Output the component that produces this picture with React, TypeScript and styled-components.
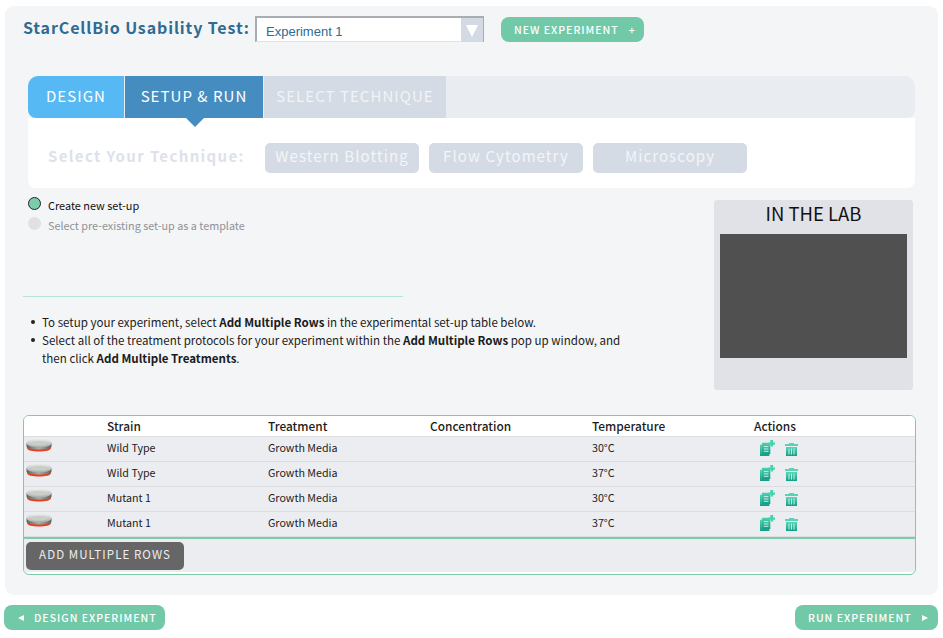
import React from "react";
import styled, { createGlobalStyle } from "styled-components";

const Global = createGlobalStyle`
  html, body { margin: 0; padding: 0; background: #fff; }
  body { font-family: "Noto Sans CJK JP", "Noto Sans", sans-serif; width: 943px; height: 638px; overflow: hidden; }
  * { box-sizing: border-box; }
`;

const Page = styled.div`
  width: 943px;
  height: 638px;
  padding: 6px 5px 0 5px;
`;
const Panel = styled.div`
  width: 933px;
  height: 589px;
  background: #f4f5f7;
  border-radius: 9px;
  padding: 10px 22px 0 18px;
`;
const Header = styled.div`
  display: flex;
  align-items: flex-start;
  height: 60px;
`;
const Title = styled.div`
  font-size: 16px;
  line-height: 23px;
  font-weight: 700;
  letter-spacing: 0.88px;
  color: #2f6b92;
  width: 232px;
  white-space: nowrap;
`;
const SelectBox = styled.div`
  width: 229px;
  height: 26px;
  display: flex;
  background: #fff;
  border-top: 2px solid #a9acb1;
  border-left: 2px solid #a9acb1;
  border-bottom: 1px solid #dfe2e7;
`;
const SelectValue = styled.div`
  flex: 1;
  font-family: "Liberation Sans", Arial, sans-serif;
  font-size: 13px;
  line-height: 27px;
  color: #2f6b92;
  padding-left: 9px;
`;
const SelectArrow = styled.div`
  width: 23px;
  height: 24px;
  margin-bottom: -1px;
  background: #d4dae4;
  border-right: 1px solid #a9acb1;
  display: flex;
  align-items: center;
  justify-content: center;
  &::after {
    content: "";
    margin-top: 1px;
    border-left: 6px solid transparent;
    border-right: 6px solid transparent;
    border-top: 12px solid #fff;
  }
`;
const PillButton = styled.div`
  height: 25px;
  background: #72c9a8;
  border-radius: 8px;
  color: #fff;
  font-size: 10.5px;
  font-weight: 500;
  letter-spacing: 1px;
  line-height: 25px;
  display: inline-flex;
  align-items: center;
  white-space: nowrap;
`;
const NewButton = styled(PillButton)`
  width: 143px;
  margin: 1px 0 0 17px;
  padding-left: 13px;
  gap: 10px;
`;
const Tabs = styled.div`
  margin-left: 5px;
  width: 887px;
  height: 42px;
  background: #e9ecf0;
  border-radius: 10px 10px 8px 8px;
  display: flex;
`;
const Tab = styled.div<{ $bg: string; $w: number; $first?: boolean; $color?: string }>`
  width: ${p => p.$w}px;
  background: ${p => p.$bg};
  color: ${p => p.$color || "#fff"};
  font-size: 15px;
  letter-spacing: 1.05px;
  line-height: 40px;
  text-align: center;
  white-space: nowrap;
  margin-right: 1px;
  border-radius: ${p => (p.$first ? "10px 0 0 8px" : "0")};
  position: relative;
`;
const Notch = styled.div`
  position: absolute;
  left: 60px;
  top: 41px;
  width: 0;
  height: 0;
  border-left: 10px solid transparent;
  border-right: 10px solid transparent;
  border-top: 10px solid #458dc0;
`;
const TechCard = styled.div`
  margin-left: 5px;
  width: 887px;
  height: 70px;
  background: #fff;
  border-radius: 0 0 8px 8px;
  display: flex;
  align-items: flex-start;
  padding: 25px 0 0 20px;
`;
const TechLabel = styled.div`
  width: 217px;
  color: #dde2ea;
  font-size: 15px;
  font-weight: 700;
  letter-spacing: 1.35px;
  line-height: 26px;
  white-space: nowrap;
`;
const TechButton = styled.div`
  width: 154px;
  height: 30px;
  margin-right: 10px;
  background: #d5dbe4;
  border-radius: 5px;
  color: #f3f5f8;
  font-size: 15px;
  letter-spacing: 1.1px;
  line-height: 26px;
  text-align: center;
  white-space: nowrap;
`;
const Middle = styled.div`
  display: flex;
  justify-content: space-between;
  height: 215px;
  margin-top: 12px;
`;
const LeftCol = styled.div`
  width: 612px;
  margin-top: -6px;
`;
const RadioRow = styled.div<{ $muted?: boolean }>`
  display: flex;
  align-items: center;
  height: 20.5px;
  margin-left: 5px;
  font-size: ${p => (p.$muted ? "10.8px" : "10.9px")};
  padding-top: ${p => (p.$muted ? "0" : "1px")};
  color: ${p => (p.$muted ? "#8f9296" : "#111")};
`;
const Radio = styled.span<{ $on?: boolean }>`
  width: 13px;
  height: 13px;
  border-radius: 50%;
  margin: -3px 7px 0 0;
  background: ${p => (p.$on ? "#7ccba9" : "#e0e1e3")};
  border: 1px solid ${p => (p.$on ? "#222" : "#e0e1e3")};
  flex: none;
`;
const Rule = styled.div`
  width: 380px;
  height: 1px;
  background: #b5e5d2;
  margin-top: 61px;
`;
const Notes = styled.ul`
  margin: 16px 0 0;
  padding: 0 0 0 19px;
  list-style: none;
  font-size: 11.55px;
  line-height: 18px;
  color: #1b1b1b;
  li { position: relative; }
  li::before {
    content: "";
    position: absolute;
    left: -11px;
    top: 7px;
    width: 4px;
    height: 4px;
    border-radius: 50%;
    background: #222;
  }
  b { font-weight: 700; }
`;
const LabBox = styled.div`
  width: 199px;
  height: 190px;
  margin-right: 3px;
  background: #e1e2e7;
  border-radius: 3px;
  padding: 0 6px;
`;
const LabTitle = styled.div`
  font-size: 18.5px;
  line-height: 26px;
  text-align: center;
  color: #111;
`;
const LabScreen = styled.div`
  height: 124px;
  margin-top: 8px;
  background: #505050;
`;
const TableWrap = styled.div`
  width: 893px;
  height: 160px;
  border: 1px solid #7ccba9;
  border-radius: 6px;
  background: #fff;
  overflow: hidden;
`;
const Row = styled.div<{ $head?: boolean }>`
  display: grid;
  grid-template-columns: 83px 161px 162px 162px 162px 1fr;
  align-items: center;
  font-size: ${p => (p.$head ? "11.9px" : "10.7px")};
  font-weight: ${p => (p.$head ? 500 : 400)};
  color: #1c1c1c;
  line-height: 20px;
  background: ${p => (p.$head ? "#fff" : "#ecedf1")};
  border-bottom: 1px solid #dcdde0;
  height: ${p => (p.$head ? "21px" : "25px")};
  padding-bottom: ${p => (p.$head ? "3px" : "2px")};
`;
const DishCell = styled.div`
  padding-left: 2px;
  height: 20px;
`;
const ActionCell = styled.div`
  display: flex;
  align-items: center;
  gap: 10px;
  padding-left: 6px;
`;
const TrashSlot = styled.span`
  display: flex;
  margin-top: 2px;
`;
const TableFoot = styled.div`
  height: 35px;
  background: #ecedf1;
  border-top: 2px solid #7ccba9;
  padding: 3px 0 0 2px;
`;
const AddRows = styled.div`
  width: 158px;
  height: 28px;
  background: #666;
  border-radius: 5px;
  color: #eee;
  font-size: 11.5px;
  letter-spacing: 1.08px;
  line-height: 25px;
  text-align: center;
  white-space: nowrap;
`;
const Footer = styled.div`
  display: flex;
  justify-content: space-between;
  margin: 10px 0 0 -1px;
  width: 934px;
`;
const BackButton = styled(PillButton)`
  width: 161px;
  padding-left: 14px;
  gap: 10px;
`;
const RunButton = styled(PillButton)`
  width: 143px;
  padding-left: 13px;
  gap: 10px;
`;
const Arrow = styled.span<{ $dir: "l" | "r" }>`
  width: 0;
  height: 0;
  border-top: 3.5px solid transparent;
  border-bottom: 3.5px solid transparent;
  ${p => (p.$dir === "l" ? "border-right: 6px solid #fff;" : "border-left: 6px solid #fff;")}
`;

const Dish = () => (
  <svg width="26" height="14" viewBox="0 0 26 14">
    <defs>
      <linearGradient id="dishSide" x1="0" y1="0" x2="1" y2="0">
        <stop offset="0" stopColor="#5c6361" />
        <stop offset="0.5" stopColor="#a9aeaa" />
        <stop offset="1" stopColor="#5c6361" />
      </linearGradient>
      <linearGradient id="dishTop" x1="0" y1="0" x2="0" y2="1">
        <stop offset="0" stopColor="#eef0ed" />
        <stop offset="1" stopColor="#a6acaa" />
      </linearGradient>
    </defs>
    <path d="M1 7v3c0 2.400 5.500 3.500 12 3.500s12-1.100 12-3.500V7z" fill="#e8401c" />
    <path d="M0.500 5v3.500c0 2.100 5.600 3 12.500 3s12.500-.900 12.500-3V5z" fill="url(#dishSide)" />
    <ellipse cx="13" cy="5" rx="12.500" ry="4.500" fill="url(#dishTop)" />
    <ellipse cx="13" cy="5.200" rx="8.500" ry="2.400" fill="#c9cec9" />
  </svg>
);

const CopyIcon = () => (
  <svg width="15" height="16" viewBox="0 0 16 17">
    <defs>
      <linearGradient id="iconA" x1="0" y1="0" x2="0" y2="1">
        <stop offset="0" stopColor="#4fd0b0" />
        <stop offset="1" stopColor="#149c86" />
      </linearGradient>
    </defs>
    <path d="M0 5h2v10h8v2H0z" fill="url(#iconA)" />
    <path d="M2 3h9v12H2z" fill="url(#iconA)" />
    <path d="M4 7h5M4 9.500h5M4 12h5" stroke="#d3f3ea" strokeWidth="1" />
    <path d="M11 0h3v2.500h2v2.500h-2v2h-2.500V5H9V2.500h2z" fill="#45d2ae" />
  </svg>
);

const TrashIcon = () => (
  <svg width="13" height="13" viewBox="0 0 13 13">
    <defs>
      <linearGradient id="iconB" x1="0" y1="0" x2="0" y2="1">
        <stop offset="0" stopColor="#5ad6b6" />
        <stop offset="1" stopColor="#149c86" />
      </linearGradient>
    </defs>
    <path d="M4 0h5v1h4v2H0V1h4z" fill="#56d4b4" />
    <path d="M1 4h11v9H1z" fill="url(#iconB)" />
    <path d="M4 5.500v6M6.500 5.500v6M9 5.500v6" stroke="#c9efe4" strokeWidth="1" />
  </svg>
);

const rows = [
  ["Wild Type", "30°C"],
  ["Wild Type", "37°C"],
  ["Mutant 1", "30°C"],
  ["Mutant 1", "37°C"],
];

export default function App() {
  return (
    <Page>
      <Global />
      <Panel>
        <Header>
          <Title>StarCellBio Usability Test:</Title>
          <SelectBox>
            <SelectValue>Experiment 1</SelectValue>
            <SelectArrow />
          </SelectBox>
          <NewButton>
            <span>NEW EXPERIMENT</span>
            <span>+</span>
          </NewButton>
        </Header>
        <Tabs>
          <Tab $bg="#57b9f4" $w={96} $first>DESIGN</Tab>
          <Tab $bg="#458dc0" $w={138}>
            SETUP &amp; RUN
            <Notch />
          </Tab>
          <Tab $bg="#d5dbe4" $w={182} $color="#f1f3f6">SELECT TECHNIQUE</Tab>
        </Tabs>
        <TechCard>
          <TechLabel>Select Your Technique:</TechLabel>
          <TechButton>Western Blotting</TechButton>
          <TechButton>Flow Cytometry</TechButton>
          <TechButton>Microscopy</TechButton>
        </TechCard>
        <Middle>
          <LeftCol>
            <RadioRow><Radio $on />Create new set-up</RadioRow>
            <RadioRow $muted><Radio />Select pre-existing set-up as a template</RadioRow>
            <Rule />
            <Notes>
              <li>To setup your experiment, select <b>Add Multiple Rows</b> in the experimental set-up table below.</li>
              <li>Select all of the treatment protocols for your experiment within the <b>Add Multiple Rows</b> pop up window, and then click <b>Add Multiple Treatments</b>.</li>
            </Notes>
          </LeftCol>
          <LabBox>
            <LabTitle>IN THE LAB</LabTitle>
            <LabScreen />
          </LabBox>
        </Middle>
        <TableWrap>
          <Row $head>
            <span />
            <span>Strain</span>
            <span>Treatment</span>
            <span>Concentration</span>
            <span>Temperature</span>
            <span>Actions</span>
          </Row>
          {rows.map(([strain, temp], i) => (
            <Row key={i}>
              <DishCell><Dish /></DishCell>
              <span>{strain}</span>
              <span>Growth Media</span>
              <span />
              <span>{temp}</span>
              <ActionCell>
                <CopyIcon />
                <TrashSlot><TrashIcon /></TrashSlot>
              </ActionCell>
            </Row>
          ))}
          <TableFoot>
            <AddRows>ADD MULTIPLE ROWS</AddRows>
          </TableFoot>
        </TableWrap>
      </Panel>
      <Footer>
        <BackButton>
          <Arrow $dir="l" />
          <span>DESIGN EXPERIMENT</span>
        </BackButton>
        <RunButton>
          <span>RUN EXPERIMENT</span>
          <Arrow $dir="r" />
        </RunButton>
      </Footer>
    </Page>
  );
}
